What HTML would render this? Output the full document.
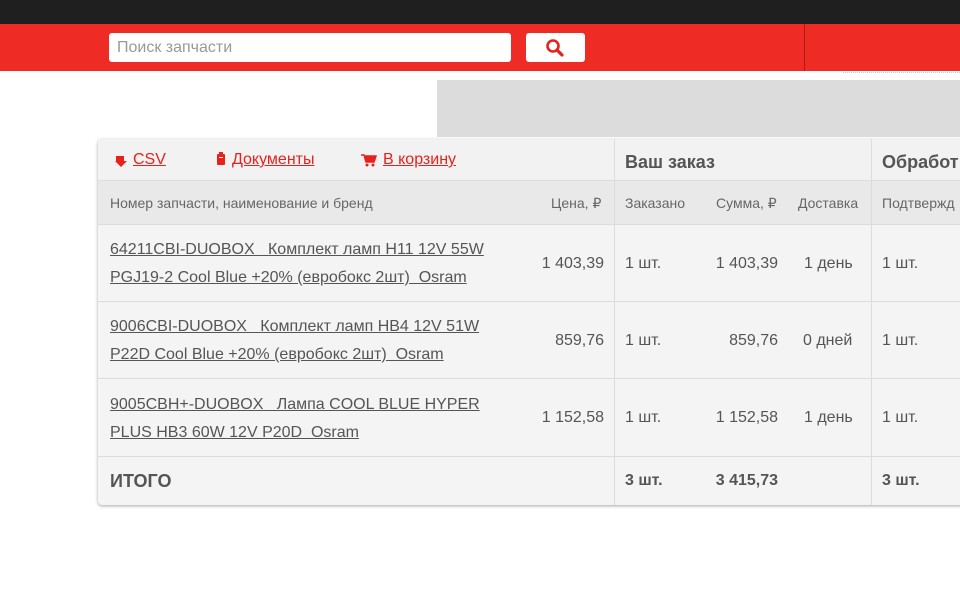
<!DOCTYPE html>
<html><head><meta charset="utf-8"><style>
*{margin:0;padding:0;box-sizing:border-box}
body{width:960px;height:600px;overflow:hidden;background:#fff;font-family:"Liberation Sans",sans-serif;color:#555;position:relative}
.a{position:absolute;white-space:nowrap}
.top{left:0;top:0;width:960px;height:24px;background:#1f1f1f}
.red{left:0;top:24px;width:960px;height:47px;background:#ee2b25}
.inp{left:109px;top:33px;width:402px;height:29px;background:#fff;border-radius:3px;color:#999;font-size:16px;line-height:30px;padding-left:8px}
.btn{left:526px;top:33px;width:59px;height:29px;background:#fff;border-radius:3px}
.gray{left:437px;top:80px;width:523px;height:57px;background:#dcdcdc}
.tbl{left:98px;top:139px;width:870px;height:366px;background:#f4f4f4;border-radius:4px;box-shadow:0 1px 3px rgba(0,0,0,.35)}
.h1{left:98px;top:139px;width:862px;height:42px;background:#f2f2f2;border-bottom:1px solid #ddd}
.h2{left:98px;top:181px;width:862px;height:43px;background:#e9e9e9}
.hl{height:1px;background:#dcdcdc;left:98px;width:862px}
.vl{width:1px;background:#dcdcdc;top:139px;height:366px}
.lnk{color:#e8211c;text-decoration:underline;font-size:16px}
.s{font-size:14px;color:#666}
.t{font-size:16px;color:#555}
.u{text-decoration:underline;font-size:16px;color:#555;line-height:28px}
.b{font-weight:bold;font-size:16px;color:#555}
</style></head><body>
<div class="a top"></div>
<div class="a red"></div>
<div class="a" style="left:804px;top:24px;width:1px;height:47px;background:#b01a16"></div>
<div class="a inp">Поиск запчасти</div>
<div class="a btn"><svg width="59" height="29"><circle cx="27" cy="13" r="5.5" fill="none" stroke="#e8211c" stroke-width="2.6"/><path d="M31 17 L36 22" stroke="#e8211c" stroke-width="3.2" stroke-linecap="round"/></svg></div>
<div class="a" style="left:843px;top:72px;width:117px;height:2px;border-top:1px dotted #ccc"></div>
<div class="a gray"></div>
<div class="a tbl"></div>
<div class="a h1"></div>
<div class="a h2"></div>
<div class="a hl" style="top:224px"></div>
<div class="a hl" style="top:301px"></div>
<div class="a hl" style="top:378px"></div>
<div class="a hl" style="top:456px"></div>
<div class="a vl" style="left:614px"></div>
<div class="a vl" style="left:871px"></div>
<svg class="a" style="left:114px;top:154px" width="14" height="14"><path d="M2 2h8v5h3l-6 6-6-6h1z" fill="#e8211c"/></svg>
<div class="a lnk" style="left:133px;top:151px">CSV</div>
<svg class="a" style="left:215px;top:152px" width="12" height="14"><rect x="2" y="2" width="8" height="11" rx="1" fill="#e8211c"/><rect x="4" y="0" width="4" height="3" fill="#e8211c"/><rect x="4" y="5" width="4" height="1" fill="#fff"/></svg>
<div class="a lnk" style="left:232px;top:151px">Документы</div>
<svg class="a" style="left:361px;top:153px" width="16" height="14"><path d="M0 2h3l2 7h8l2-6H4" fill="#e8211c" stroke="#e8211c" stroke-width="1.5"/><circle cx="6" cy="12" r="1.5" fill="#e8211c"/><circle cx="12" cy="12" r="1.5" fill="#e8211c"/></svg>
<div class="a lnk" style="left:383px;top:151px">В корзину</div>
<div class="a b" style="left:625px;top:152px;font-size:18px">Ваш заказ</div>
<div class="a b" style="left:882px;top:152px;font-size:18px">Обработ</div>
<div class="a s" style="left:110px;top:195px">Номер запчасти, наименование и бренд</div>
<div class="a s" style="left:551px;top:195px">Цена, ₽</div>
<div class="a s" style="left:625px;top:195px">Заказано</div>
<div class="a s" style="left:716px;top:195px">Сумма, ₽</div>
<div class="a s" style="left:798px;top:195px">Доставка</div>
<div class="a s" style="left:882px;top:195px">Подтвержд</div>

<div class="a u" style="left:110px;top:236px">64211CBI-DUOBOX &nbsp; Комплект ламп H11 12V 55W<br>PGJ19-2 Cool Blue +20% (евробокс 2шт) &nbsp;Osram</div>
<div class="a t" style="right:356px;top:255px">1 403,39</div>
<div class="a t" style="left:625px;top:255px">1 шт.</div>
<div class="a t" style="right:182px;top:255px">1 403,39</div>
<div class="a t" style="left:804px;top:255px">1 день</div>
<div class="a t" style="left:882px;top:255px">1 шт.</div>

<div class="a u" style="left:110px;top:313px">9006CBI-DUOBOX &nbsp; Комплект ламп HB4 12V 51W<br>P22D Cool Blue +20% (евробокс 2шт) &nbsp;Osram</div>
<div class="a t" style="right:356px;top:332px">859,76</div>
<div class="a t" style="left:625px;top:332px">1 шт.</div>
<div class="a t" style="right:182px;top:332px">859,76</div>
<div class="a t" style="left:803px;top:332px">0 дней</div>
<div class="a t" style="left:882px;top:332px">1 шт.</div>

<div class="a u" style="left:110px;top:391px">9005CBH+-DUOBOX &nbsp; Лампа COOL BLUE HYPER<br>PLUS HB3 60W 12V P20D &nbsp;Osram</div>
<div class="a t" style="right:356px;top:409px">1 152,58</div>
<div class="a t" style="left:625px;top:409px">1 шт.</div>
<div class="a t" style="right:182px;top:409px">1 152,58</div>
<div class="a t" style="left:804px;top:409px">1 день</div>
<div class="a t" style="left:882px;top:409px">1 шт.</div>

<div class="a b" style="left:110px;top:471px;font-size:18px">ИТОГО</div>
<div class="a b" style="left:625px;top:472px">3 шт.</div>
<div class="a b" style="right:182px;top:472px">3 415,73</div>
<div class="a b" style="left:882px;top:472px">3 шт.</div>
</body></html>
